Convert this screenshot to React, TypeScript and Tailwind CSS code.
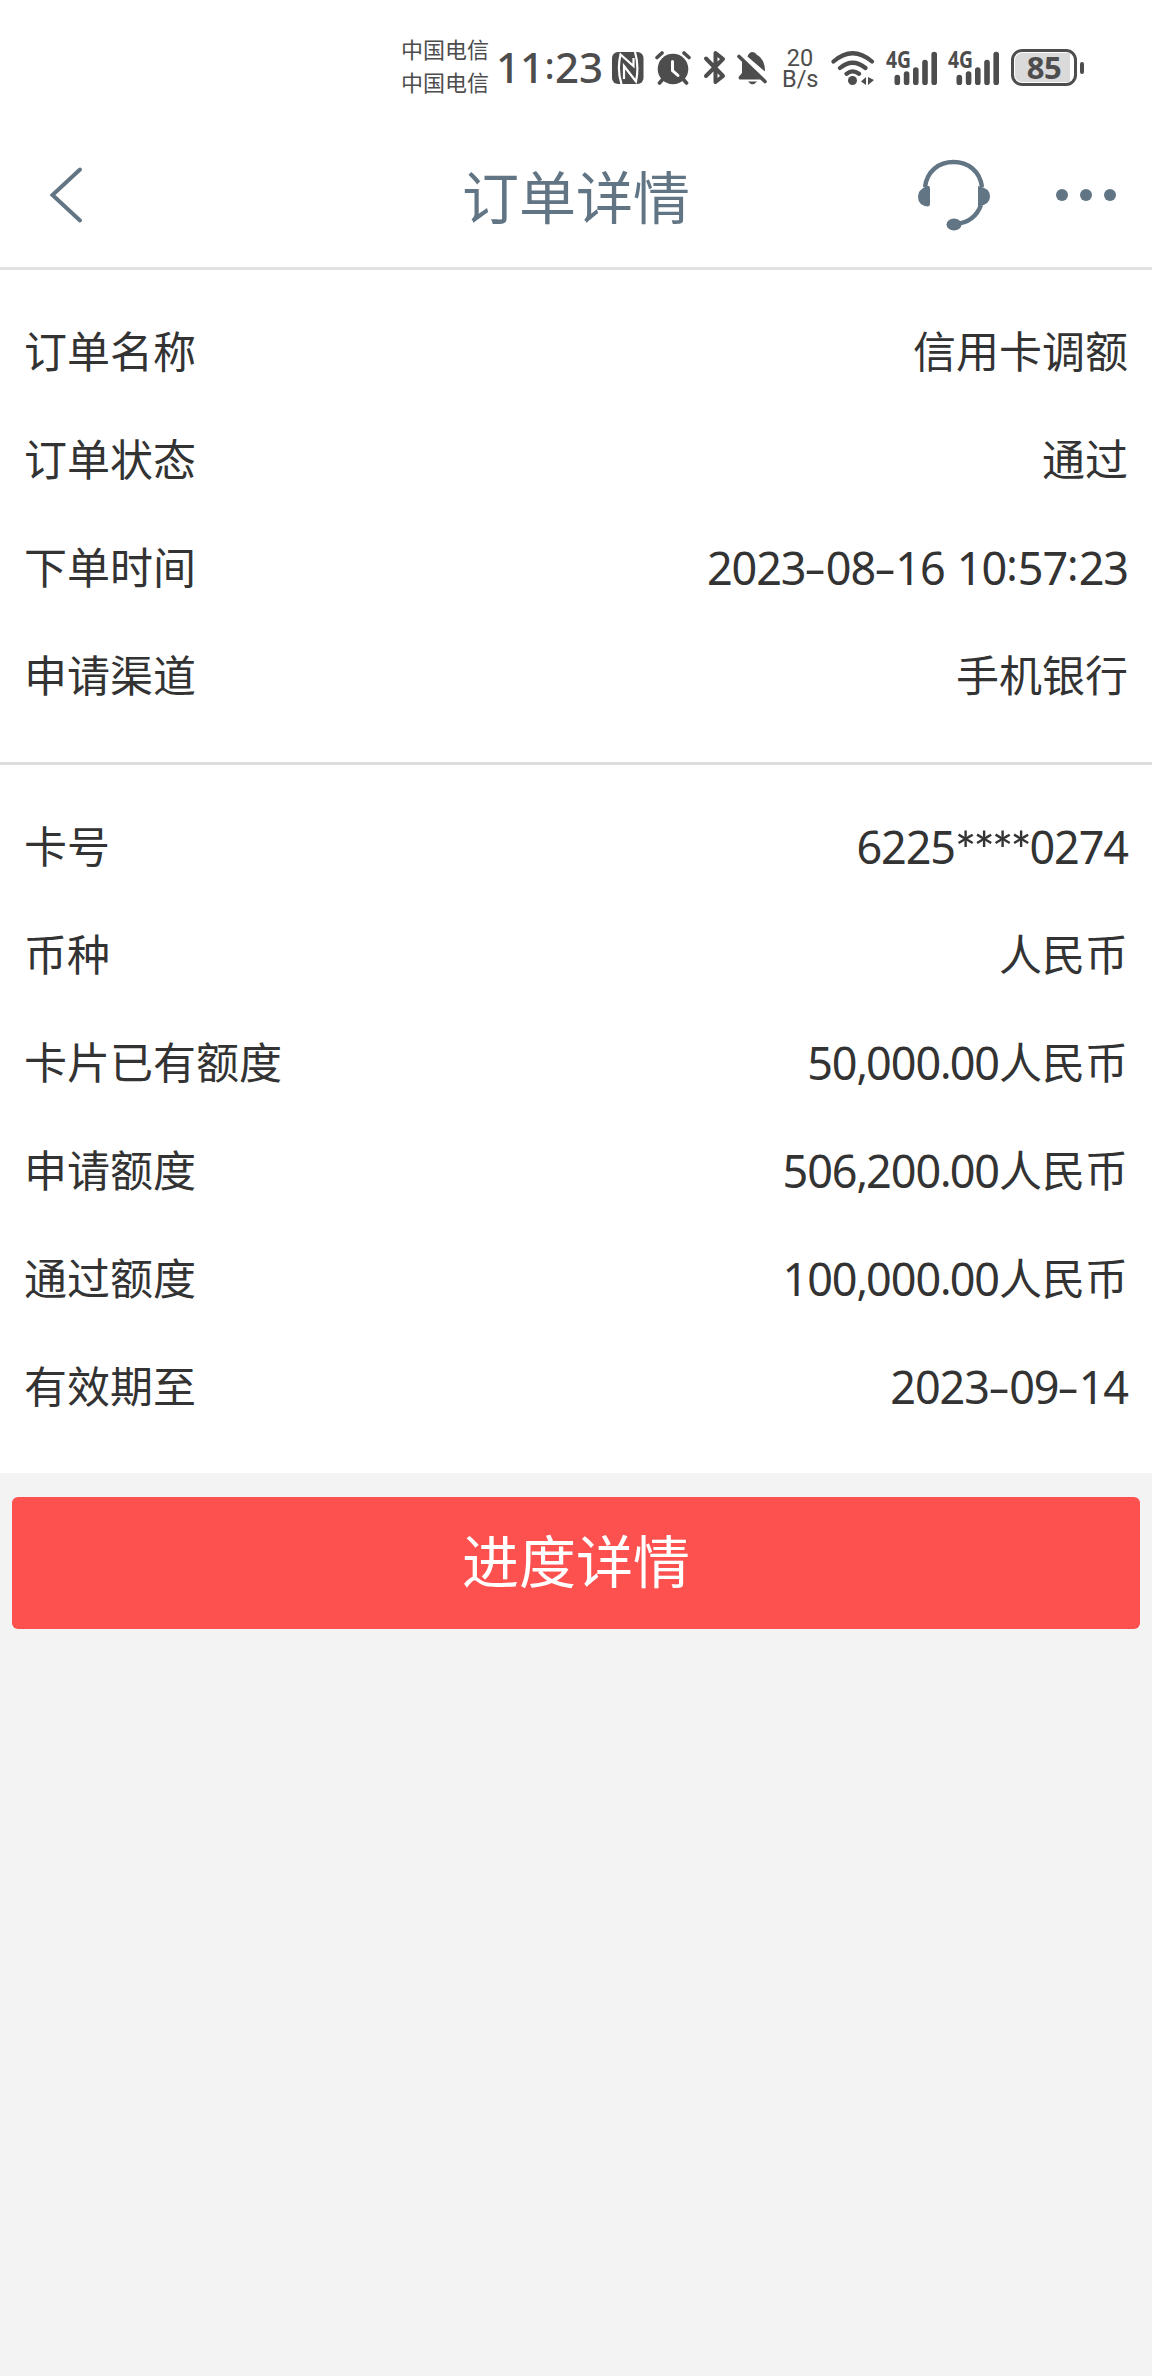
import { Fragment } from "react";

const orderRows = [
  { label: "订单名称", value: "信用卡调额" },
  { label: "订单状态", value: "通过" },
  { label: "下单时间", value: "2023-08-16 10:57:23" },
  { label: "申请渠道", value: "手机银行" },
];

const cardRows = [
  { label: "卡号", value: "6225****0274" },
  { label: "币种", value: "人民币" },
  { label: "卡片已有额度", value: "50,000.00人民币" },
  { label: "申请额度", value: "506,200.00人民币" },
  { label: "通过额度", value: "100,000.00人民币" },
  { label: "有效期至", value: "2023-09-14" },
];

const Signal = () => (
  <div className="relative h-[34px] w-[51px]">
    <span className="absolute -left-px -top-[5px] origin-left scale-x-[0.84] font-['Noto_Sans'] text-[23px] font-bold leading-[26px]">
      4G
    </span>
    <svg className="h-[34px] w-[51px]" viewBox="0 0 51 34" stroke="currentColor" strokeWidth="5.6" strokeLinecap="round">
      <path d="M10.300 26.500v5M19.600 23v8.500M28.800 19v12.500M38 11.500v20M47.200 3.500v28" />
    </svg>
  </div>
);

const StatusBar = () => (
  <div className="flex h-[135px] items-center bg-white pl-[401px] text-[#4d4d4d]">
    <div className="w-[90px] pb-[5px] text-[22px] leading-[33px]">
      <p>中国电信</p>
      <p>中国电信</p>
    </div>
    <span className="ml-[5px] flex w-[116px] items-center whitespace-nowrap pb-px font-['Noto_Sans'] text-[42px] font-medium leading-[60px]">
      <span>11</span>
      <span className="mb-[2px] w-[11px] text-center text-[36px]">:</span>
      <span>23</span>
    </span>

    {/* NFC */}
    <svg className="h-8 w-8 shrink-0" viewBox="0 0 32 32" fill="none">
      <rect width="31.500" height="32" rx="6" fill="currentColor" />
      <path
        d="M9.500 32C6.500 23 6.500 11 8.500 2.500L21.500 14V6M12 27V14L24 29.500C26 20 26 10 23 0"
        stroke="white"
        strokeWidth="2.200"
      />
    </svg>

    {/* Despertador */}
    <svg className="ml-[11px] h-[34px] w-9 shrink-0" viewBox="0 0 36 34" fill="none" strokeLinecap="round">
      <circle cx="18" cy="18" r="15.300" fill="currentColor" />
      <path d="M2 6.500l5-4.500M34 6.500l-5-4.500M8 28l-3.500 4M28 28l3.500 4" stroke="currentColor" strokeWidth="3.600" />
      <path d="M17.500 10.500v9l5.500 5" stroke="white" strokeWidth="3" />
    </svg>

    <svg
      className="ml-[12px] h-[35px] w-[23px] shrink-0"
      viewBox="0 0 23 35"
      fill="none"
      stroke="currentColor"
      strokeWidth="4"
      strokeLinecap="round"
      strokeLinejoin="round"
    >
      <path d="M3 8.500l17 17.500-7.500 6V3l7.500 6L3 26" />
    </svg>

    {/* Sino silenciado */}
    <svg className="ml-[11px] h-[34px] w-[31px] shrink-0" viewBox="0 0 31 34" fill="currentColor">
      <path d="M5 10L24 28.500H2.500Q1 27 2 25.500L5 22ZM10.500 5.500Q12 1 15.500 1Q18.500 1 19.500 3.500Q28 8 28 20.500L11 6Z" />
      <path d="M11 30.500h9q-4.500 5.500-9 0" />
      <path d="M2 5.500l26 25" stroke="currentColor" strokeWidth="3.600" strokeLinecap="round" />
    </svg>

    <div className="ml-[14px] w-9 pt-[2px] text-center font-['Roboto'] text-[23.500px] leading-[21px]">
      <p>20</p>
      <p>B/s</p>
    </div>

    <svg className="ml-[13px] h-[34px] w-[45px] shrink-0" viewBox="0 0 45 34" fill="none" stroke="currentColor" strokeLinecap="round">
      <path d="M2.500 10.500Q21.500-6 41 10.500M9 17Q21.500 6.500 34.500 17M15.500 22.800Q21.500 18 28 22.800" strokeWidth="4.200" />
      <circle cx="21.500" cy="29.500" r="4.500" fill="currentColor" stroke="none" />
      <path d="M30 30.500l5-4.500v8zM37 26v8l6-5z" fill="currentColor" stroke="none" />
    </svg>

    <div className="ml-[11px] flex gap-[11px]">
      <Signal />
      <Signal />
    </div>

    {/* Bateria */}
    <div className="ml-[11px] flex items-center gap-[3px]">
      <div className="relative h-[37px] w-[66px] rounded-[11px] border-[3px] border-current bg-white p-px">
        <div className="h-full w-[55px] rounded-l-[7px] bg-[#dadada]" />
        <span className="absolute inset-0 text-center font-['Noto_Sans'] text-[31px] font-bold leading-[31px] tracking-[-0.500px]">
          85
        </span>
      </div>
      <div className="h-3 w-1 rounded-full bg-current" />
    </div>
  </div>
);

const Header = () => (
  <header className="flex h-[135px] items-center border-b-[3px] border-[#e2e2e2] bg-white pl-[49px] pr-[36px] text-[#627584]">
    <button className="w-[413px]" aria-label="返回">
      <svg className="relative -top-[6px] h-[58px] w-[36px]" viewBox="0 0 36 58" fill="none" stroke="currentColor" strokeWidth="4" strokeLinecap="round">
        <path d="M31 3.500L3.500 29L31 54.500" />
      </svg>
    </button>
    <h1 className="relative -top-[7px] whitespace-nowrap text-[57px] leading-[80px]">订单详情</h1>
    <div className="relative -top-[6px] ml-auto flex items-center">
      <svg className="h-[72px] w-[74px]" viewBox="0 0 74 72" fill="none">
        <path d="M7 28C9 12 21 3 35.500 3S62 12 64 28M63 46C59 57 50 64 37 65" stroke="currentColor" strokeWidth="4.400" />
        <path d="M12 30Q12 26 8.500 27Q0 31 0 37.500Q0 46.500 10 47.500Q12 47 12 45ZM60 27Q72 29 72 37.500Q72 46 60 47.500Z" fill="currentColor" />
        <ellipse cx="36" cy="65.500" rx="7.500" ry="6" fill="currentColor" />
      </svg>
      <div className="ml-[64px] flex gap-3">
        <i className="size-3 rounded-full bg-current" />
        <i className="size-3 rounded-full bg-current" />
        <i className="size-3 rounded-full bg-current" />
      </div>
    </div>
  </header>
);

// Ajusta a largura dos sinais entre os algarismos
const Value = ({ text }: { text: string }) => (
  <span className="whitespace-nowrap">
    {text.split(/([-:,.\s]|\*+|[0-9]+)/).map((part, i) => (
      <Fragment key={i}>
        {part === "-" ? (
          <span className="inline-block w-[20.300px] scale-x-[1.600] text-center font-['Noto_Sans'] leading-none">-</span>
        ) : part === ":" ? (
          <span className="relative -top-[3px] inline-block w-[11.700px] text-center font-['Noto_Sans'] leading-none">:</span>
        ) : part === "," || part === "." ? (
          <span className="inline-block w-[9.700px] text-center font-['Noto_Sans'] leading-none">{part}</span>
        ) : part === " " ? (
          <span className="tracking-[2.500px]"> </span>
        ) : part.startsWith("*") ? (
          <span className="relative top-[6px] inline-block w-[74.500px] font-['Lato'] text-[50px] font-medium leading-[40px] tracking-[-2.700px]">
            {part}
          </span>
        ) : /^[0-9]+$/.test(part) ? (
          <span className="relative top-px font-['Noto_Sans'] text-[45px] leading-none tracking-[-1.100px]">{part}</span>
        ) : (
          part
        )}
      </Fragment>
    ))}
  </span>
);

const Rows = ({ rows }: { rows: { label: string; value: string }[] }) => (
  <dl className="px-6 pb-[35px] pt-[25px]">
    {rows.map((row) => (
      <div key={row.label} className="flex h-[108px] items-center justify-between text-[43px] leading-[60px] text-[#333333]">
        <dt>{row.label}</dt>
        <dd>
          <Value text={row.value} />
        </dd>
      </div>
    ))}
  </dl>
);

const App = () => {
  return (
    <div className="min-h-[2376px] w-full bg-[#f3f3f3] font-['Noto_Sans_CJK_SC',sans-serif]">
      <StatusBar />
      <Header />
      <main>
        <section className="border-b-[3px] border-[#dddddd] bg-white">
          <Rows rows={orderRows} />
        </section>
        <section className="bg-white">
          <Rows rows={cardRows} />
        </section>
        <div className="px-3 pt-6">
          <button className="h-[132px] w-full rounded-[6px] bg-[#fd5150] pb-[10px] text-[57px] leading-[80px] text-white">
            进度详情
          </button>
        </div>
      </main>
    </div>
  );
};

export default App;
